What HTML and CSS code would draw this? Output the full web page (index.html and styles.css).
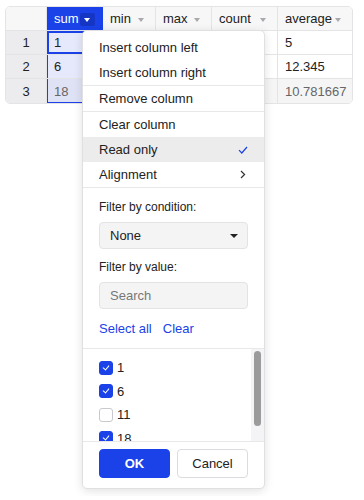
FILE: index.html
```html
<!DOCTYPE html>
<html lang="en">
<head>
    <meta charset="UTF-8">
    <meta name="viewport" content="width=device-width, initial-scale=1.0">
    <title>Column menu</title>
    <link rel="stylesheet" href="styles.css">
</head>
<body>
    <div class="sheet">
        <div class="grid-wrap">
            <table class="grid">
                <colgroup>
                    <col class="w-rh"><col class="w-sum"><col class="w-min"><col class="w-max"><col class="w-count"><col class="w-avg">
                </colgroup>
                <thead>
                    <tr>
                        <th class="corner"></th>
                        <th class="col-head selected"><span>sum</span><span class="drop-btn"></span></th>
                        <th class="col-head"><span>min</span><span class="caret"></span></th>
                        <th class="col-head"><span>max</span><span class="caret"></span></th>
                        <th class="col-head"><span>count</span><span class="caret"></span></th>
                        <th class="col-head"><span>average</span><span class="caret"></span></th>
                    </tr>
                </thead>
                <tbody>
                    <tr>
                        <th class="row-head">1</th>
                        <td class="sel active">1</td>
                        <td></td><td></td><td></td>
                        <td>5</td>
                    </tr>
                    <tr>
                        <th class="row-head">2</th>
                        <td class="sel">6</td>
                        <td></td><td></td><td></td>
                        <td>12.345</td>
                    </tr>
                    <tr class="muted">
                        <th class="row-head">3</th>
                        <td class="sel last">18</td>
                        <td></td><td></td><td></td>
                        <td>10.781667</td>
                    </tr>
                </tbody>
            </table>
        </div>

        <div class="menu">
            <div class="menu-items">
                <div class="item">Insert column left</div>
                <div class="item">Insert column right</div>
                <div class="sep"></div>
                <div class="item">Remove column</div>
                <div class="sep"></div>
                <div class="item">Clear column</div>
                <div class="item current">Read only
                    <svg class="tick" width="10" height="8" viewBox="0 0 10 8"><path d="M1 4.2 L3.8 7 L9 1" fill="none" stroke="#1a42e8" stroke-width="1.2"/></svg>
                </div>
                <div class="item">Alignment
                    <svg class="chev" width="6" height="9" viewBox="0 0 6 9"><path d="M1 1 L4.6 4.5 L1 8" fill="none" stroke="#333" stroke-width="1.2"/></svg>
                </div>
            </div>
            <div class="sep"></div>

            <div class="filters">
                <div class="label">Filter by condition:</div>
                <div class="select">None<span class="select-caret"></span></div>
                <div class="label">Filter by value:</div>
                <div class="search">Search</div>
                <div class="links">
                    <a href="#">Select all</a>
                    <a href="#">Clear</a>
                </div>
            </div>
            <div class="sep"></div>

            <div class="values">
                <div class="value-list">
                    <label class="value"><span class="box on"></span>1</label>
                    <label class="value"><span class="box on"></span>6</label>
                    <label class="value"><span class="box"></span>11</label>
                    <label class="value"><span class="box on"></span>18</label>
                </div>
                <div class="scroll-track"><div class="scroll-thumb"></div></div>
            </div>
            <div class="sep"></div>

            <div class="actions">
                <button class="btn primary">OK</button>
                <button class="btn">Cancel</button>
            </div>
        </div>
    </div>
</body>
</html>
```

FILE: styles.css
```css
body {
    margin: 0;
    padding: 6px 11px 0 5px;
    font-family: "Liberation Sans", Arial, sans-serif;
    font-size: 13px;
    color: #222;
    background: #fff;
}
.sheet {
    position: relative;
    min-height: 490px;
}
.grid-wrap {
    width: 348px;
    border: 1px solid #e4e4e6;
    border-radius: 5px;
    overflow: hidden;
    box-sizing: border-box;
}
.grid {
    border-collapse: separate;
    border-spacing: 0;
    table-layout: fixed;
    width: 346px;
}
.w-rh { width: 41px; }
.w-sum { width: 56px; }
.w-min { width: 53px; }
.w-max { width: 56px; }
.w-count { width: 66px; }
.w-avg { width: 74px; }
.grid th,
.grid td {
    height: 24px;
    padding: 0 7px;
    border-right: 1px solid #e4e4e6;
    border-bottom: 1px solid #e4e4e6;
    font-weight: normal;
    text-align: left;
    white-space: nowrap;
    box-sizing: border-box;
}
.grid tr > *:last-child {
    border-right: none;
}
.grid tbody tr:last-child > * {
    border-bottom: none;
}
.corner {
    background: #f7f7f8;
}
.col-head {
    background: #f7f7f8;
    position: relative;
}
.col-head .caret {
    position: absolute;
    right: 11px;
    top: 11px;
    border-left: 3.5px solid transparent;
    border-right: 3.5px solid transparent;
    border-top: 4px solid #a8a8ad;
}
.col-head.selected {
    background: #1a42e8;
    color: #fff;
    border-right-color: #1a42e8;
}
.drop-btn {
    position: absolute;
    left: 33px;
    top: 6px;
    width: 15px;
    height: 13px;
    background: #1536c4;
    border-radius: 2px;
}
.drop-btn::after {
    content: "";
    position: absolute;
    left: 4px;
    top: 5px;
    border-left: 3.5px solid transparent;
    border-right: 3.5px solid transparent;
    border-top: 4px solid #fff;
}
.grid .row-head {
    background: #ececee;
    text-align: center;
}
.grid td.sel {
    background: #e6e9fc;
    box-shadow: inset 1px 0 0 #1a42e8;
}
.grid td.sel.active {
    box-shadow: inset 0 0 0 2px #1a42e8;
}
.grid td.sel.last {
    background: #dfe2f4;
    box-shadow: inset 1px -1px 0 #1a42e8;
}
.muted td {
    background: #f5f5f6;
    color: #666;
}

.menu {
    position: absolute;
    left: 77px;
    top: 24px;
    width: 183px;
    box-sizing: border-box;
    background: #fff;
    border: 1px solid #e0e0e2;
    border-radius: 5px;
    box-shadow: 0 2px 10px rgba(0, 0, 0, 0.12);
}
.menu-items {
    padding-top: 4px;
}
.item {
    height: 25px;
    padding: 0 20px 0 16px;
    display: flex;
    align-items: center;
    justify-content: space-between;
}
.item.current {
    background: #ececed;
}
.sep {
    height: 1px;
    background: #e8e8ea;
}
.tick {
    margin-right: -4px;
}
.chev {
    margin-right: -2px;
}
.filters {
    padding: 12px 16px 12px 16px;
}
.label {
    font-size: 12px;
    line-height: 14px;
}
.select,
.search {
    position: relative;
    height: 27px;
    margin: 8px 0 11px;
    padding: 0 10px;
    display: flex;
    align-items: center;
    background: #f4f4f5;
    border: 1px solid #e3e3e6;
    border-radius: 4px;
    box-sizing: border-box;
}
.search {
    color: #777;
    margin-bottom: 12px;
}
.select-caret {
    position: absolute;
    right: 9px;
    top: 11px;
    border-left: 4px solid transparent;
    border-right: 4px solid transparent;
    border-top: 4px solid #222;
}
.links {
    display: flex;
    gap: 11px;
}
.links a {
    color: #1a42e8;
    text-decoration: none;
}
.values {
    display: flex;
    height: 92px;
}
.value-list {
    flex: 1;
    overflow: hidden;
    padding: 7px 16px 0;
}
.value {
    height: 23.5px;
    display: flex;
    align-items: center;
    gap: 4px;
}
.box {
    width: 12px;
    height: 12px;
    border: 1px solid #c9c9ce;
    border-radius: 3px;
    background: #fff;
    position: relative;
}
.box.on {
    background: #1a42e8;
    border-color: #1a42e8;
}
.box.on::after {
    content: "";
    position: absolute;
    left: 4px;
    top: 2px;
    width: 3px;
    height: 5px;
    border: solid #fff;
    border-width: 0 1px 1px 0;
    transform: rotate(40deg);
}
.scroll-track {
    width: 13px;
    background: #f4f4f6;
    padding: 2px 0 0 3px;
    box-sizing: border-box;
}
.scroll-thumb {
    width: 7px;
    height: 75px;
    border-radius: 4px;
    background: #9b9b9b;
}
.actions {
    display: flex;
    gap: 7px;
    padding: 7px 16px 10px;
}
.btn {
    height: 29px;
    width: 71px;
    font-family: inherit;
    font-size: 13px;
    color: #222;
    background: #fff;
    border: 1px solid #dcdce0;
    border-radius: 4px;
}
.btn.primary {
    background: #1a42e8;
    border-color: #1a42e8;
    color: #fff;
    font-weight: bold;
}
```
